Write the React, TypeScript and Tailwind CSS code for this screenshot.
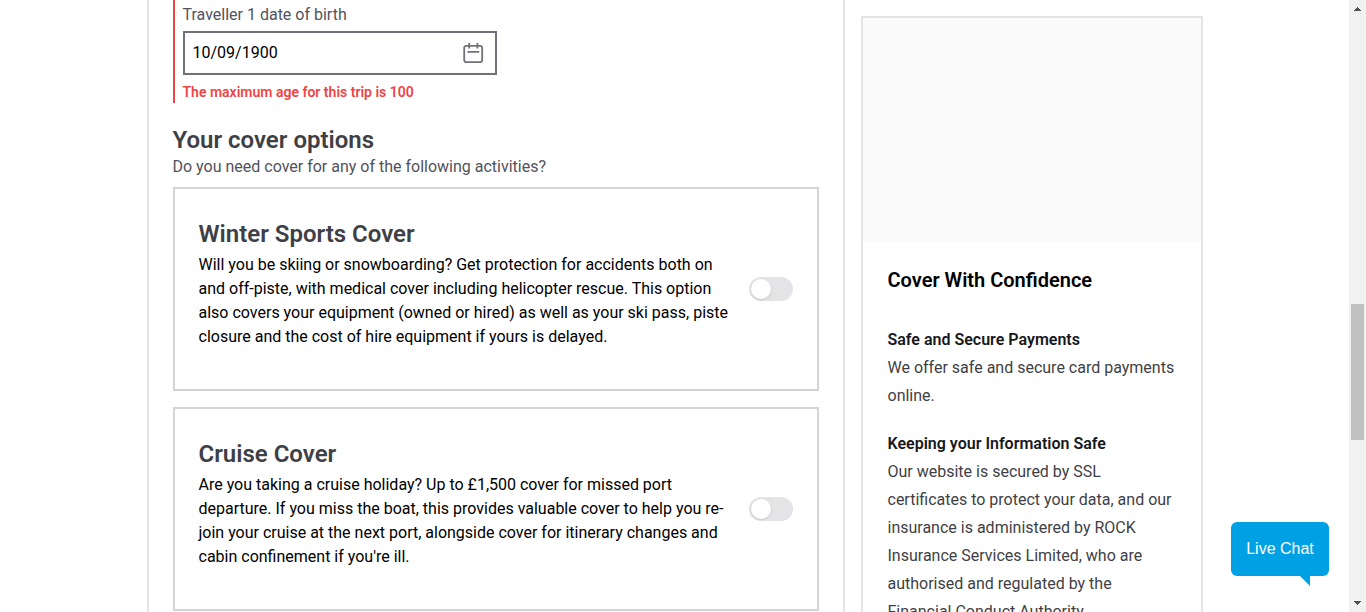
import React from "react";

type CoverOption = { id: string; title: string; description: string };

const coverOptions: CoverOption[] = [
  {
    id: "winter-sports",
    title: "Winter Sports Cover",
    description:
      "Will you be skiing or snowboarding? Get protection for accidents both on and off-piste, with medical cover including helicopter rescue. This option also covers your equipment (owned or hired) as well as your ski pass, piste closure and the cost of hire equipment if yours is delayed.",
  },
  {
    id: "cruise",
    title: "Cruise Cover",
    description:
      "Are you taking a cruise holiday? Up to £1,500 cover for missed port departure. If you miss the boat, this provides valuable cover to help you re-join your cruise at the next port, alongside cover for itinerary changes and cabin confinement if you're ill.",
  },
];

function CalendarIcon() {
  return (
    <svg
      className="h-6 w-6"
      viewBox="0 0 24 24"
      fill="none"
      stroke="currentColor"
      strokeWidth="1.8"
      aria-hidden="true"
    >
      <rect x="3.2" y="4.8" width="18" height="16.3" rx="2" />
      <path d="M8.2 2v5.6M16.4 2v5.6M6.4 10.8h11.8" />
    </svg>
  );
}

function DateOfBirthField() {
  return (
    <div className="border-l-2 border-[#ef4444] pt-[3px] pl-2">
      <label htmlFor="dob" className="block leading-6 text-[#52525b]">
        Traveller 1 date of birth
      </label>
      <div className="mt-1 flex h-11 w-full max-w-[314px] items-center border-2 border-[#71717a] pr-[10px] pl-2">
        <input
          id="dob"
          type="text"
          defaultValue="10/09/1900"
          aria-invalid="true"
          aria-describedby="dob-error"
          className="min-w-0 flex-1 bg-transparent leading-6 text-black outline-none"
        />
        <button type="button" aria-label="Choose date" className="text-[#71717a]">
          <CalendarIcon />
        </button>
      </div>
      <p id="dob-error" className="pt-[7px] pb-px text-sm leading-5 font-semibold text-[#ef4444]">
        The maximum age for this trip is 100
      </p>
    </div>
  );
}

function CoverCard({ option }: { option: CoverOption }) {
  return (
    <div className="flex items-center gap-4 border-2 border-[#d4d4d8] p-6">
      <div className="min-w-0 flex-1 pt-[7px] pb-4">
        <label
          htmlFor={option.id}
          className="mb-[5px] block text-2xl leading-7 font-semibold text-[#3f3f46]"
        >
          {option.title}
        </label>
        <p className="leading-6 text-black">{option.description}</p>
      </div>
      <input
        id={option.id}
        type="checkbox"
        role="switch"
        className="h-6 w-11 shrink-0 cursor-pointer appearance-none rounded-full bg-[#e4e4e7] p-0.5 before:block before:h-5 before:w-5 before:rounded-full before:bg-white before:shadow-sm checked:bg-sky-500 checked:before:translate-x-5"
      />
    </div>
  );
}

function Sidebar() {
  return (
    <aside className="mt-4 w-[342px] shrink-0 border-2 border-[#e4e4e7]">
      <div className="h-56 bg-[#fafafa]" />
      <div className="py-6 pr-6 pl-[25px] leading-7 text-[#3f3f46]">
        <h2 className="mb-8 text-xl leading-7 font-semibold text-black">Cover With Confidence</h2>
        <section className="mb-5">
          <h3 className="font-semibold text-[#18181b]">Safe and Secure Payments</h3>
          <p>We offer safe and secure card payments online.</p>
        </section>
        <section>
          <h3 className="font-semibold text-[#18181b]">Keeping your Information Safe</h3>
          <p>
            Our website is secured by SSL certificates to protect your data, and our insurance is
            administered by ROCK Insurance Services Limited, who are authorised and regulated by the
            Financial Conduct Authority.
          </p>
        </section>
      </div>
    </aside>
  );
}

function ScrollTrack() {
  return (
    <div
      className="flex w-[17px] shrink-0 flex-col items-center justify-between bg-[#f1f1f1] py-[7px] text-[#505050]"
      aria-hidden="true"
    >
      <svg className="h-1 w-[7px]" viewBox="0 0 7 4" fill="currentColor">
        <path d="M3 0h1v1h1v1h1v1h1v1H0V3h1V2h1V1h1z" />
      </svg>
      <div className="flex w-full flex-1 flex-col items-center">
        <div className="grow-[293]" />
        <div className="w-[13px] grow-[136] bg-[#c1c1c1]" />
        <div className="grow-[161]" />
      </div>
      <svg className="h-1 w-[7px]" viewBox="0 0 7 4" fill="currentColor">
        <path d="M0 0h7v1H6v1H5v1H4v1H3V3H2V2H1V1H0z" />
      </svg>
    </div>
  );
}

function LiveChat() {
  return (
    <button
      type="button"
      className="fixed right-[37px] bottom-9 h-[54px] w-[98px] rounded-md bg-[#00a1e4] text-base text-white [font-family:'Liberation_Sans',Arial,sans-serif]"
    >
      Live Chat
      <svg
        className="absolute top-full right-[19px] h-[10px] w-[10px]"
        viewBox="0 0 10 10"
        fill="#00a1e4"
        aria-hidden="true"
      >
        <path d="M0 0h10v10z" />
      </svg>
    </button>
  );
}

export default function App() {
  return (
    <div className="flex h-screen overflow-hidden bg-white text-base [font-family:Roboto,sans-serif]">
      <div className="min-w-0 flex-1 overflow-hidden">
        <div className="mx-auto flex min-h-full max-w-[1056px] gap-4">
          <main className="min-w-0 flex-1 border-x-2 border-[#e4e4e7] px-6">
            <DateOfBirthField />
            <h2 className="mt-[23px] mb-px text-2xl leading-7 font-semibold text-[#3f3f46]">
              Your cover options
            </h2>
            <p className="leading-6 text-[#52525b]">
              Do you need cover for any of the following activities?
            </p>
            <div className="mt-2 flex flex-col gap-4">
              {coverOptions.map((option) => (
                <CoverCard key={option.id} option={option} />
              ))}
            </div>
          </main>
          <Sidebar />
        </div>
      </div>
      <ScrollTrack />
      <LiveChat />
    </div>
  );
}
